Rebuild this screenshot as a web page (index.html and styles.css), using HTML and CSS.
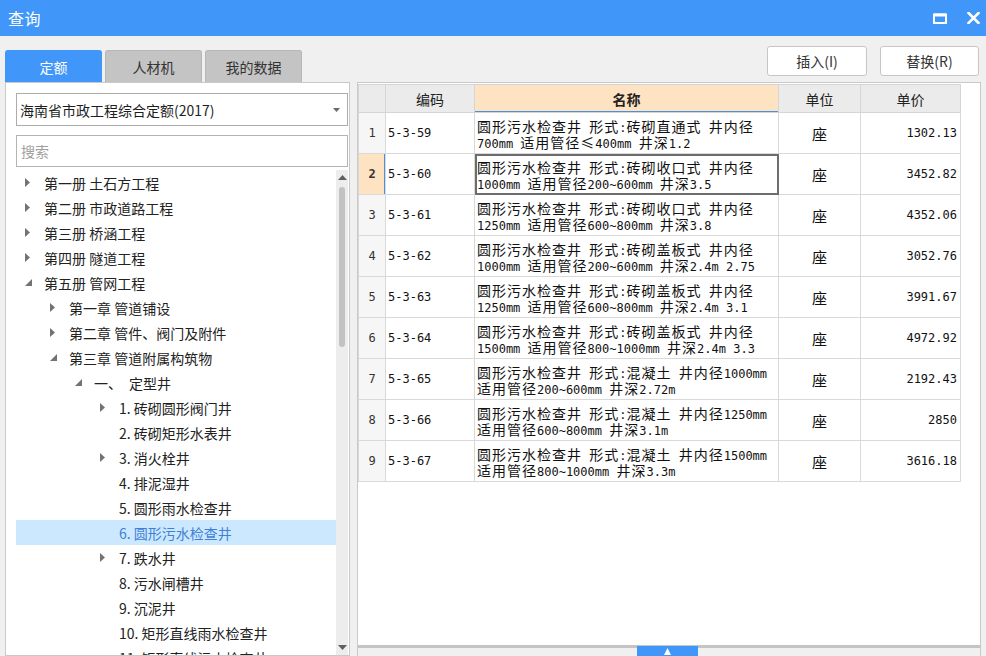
FILE: index.html
```html
<!DOCTYPE html>
<html lang="zh-CN">
<head>
<meta charset="utf-8">
<title>查询</title>
<link rel="stylesheet" href="styles.css">
</head>
<body>
<div class="titlebar">
  <div class="title">查询</div>
  <div class="win-btns">
    <svg class="win-icon" width="14" height="11" viewBox="0 0 14 11"><rect x="1" y="1.5" width="12" height="8.5" fill="none" stroke="#fff" stroke-width="2"/><rect x="1" y="0.5" width="12" height="3" fill="#fff"/></svg>
    <svg class="win-icon" width="13" height="12" viewBox="0 0 13 12"><path d="M1.5 1 L11.5 11 M11.5 1 L1.5 11" stroke="#fff" stroke-width="2.6" stroke-linecap="square"/></svg>
  </div>
</div>
<div class="main">
  <div class="left-col">
    <div class="tabs">
      <div class="tab active">定额</div>
      <div class="tab">人材机</div>
      <div class="tab">我的数据</div>
    </div>
    <div class="left-panel">
      <div class="combo">
        <span class="combo-text">海南省市政工程综合定额(2017)</span>
        <svg width="7" height="4" viewBox="0 0 7 4"><polygon points="0,0 7,0 3.5,4" fill="#6a6a6a"/></svg>
      </div>
      <div class="search">搜索</div>
      <div class="tree">
        <div class="tree-list">
          <div class="ti l0"><span class="arr"><svg width="5" height="9" viewBox="0 0 5 9"><polygon points="0,0 5,4.5 0,9" fill="#737373"/></svg></span>第一册 土石方工程</div>
          <div class="ti l0"><span class="arr"><svg width="5" height="9" viewBox="0 0 5 9"><polygon points="0,0 5,4.5 0,9" fill="#737373"/></svg></span>第二册 市政道路工程</div>
          <div class="ti l0"><span class="arr"><svg width="5" height="9" viewBox="0 0 5 9"><polygon points="0,0 5,4.5 0,9" fill="#737373"/></svg></span>第三册 桥涵工程</div>
          <div class="ti l0"><span class="arr"><svg width="5" height="9" viewBox="0 0 5 9"><polygon points="0,0 5,4.5 0,9" fill="#737373"/></svg></span>第四册 隧道工程</div>
          <div class="ti l0"><span class="arr"><svg width="7" height="7" viewBox="0 0 7 7"><polygon points="7,0 7,7 0,7" fill="#737373"/></svg></span>第五册 管网工程</div>
          <div class="ti l1"><span class="arr"><svg width="5" height="9" viewBox="0 0 5 9"><polygon points="0,0 5,4.5 0,9" fill="#737373"/></svg></span>第一章 管道铺设</div>
          <div class="ti l1"><span class="arr"><svg width="5" height="9" viewBox="0 0 5 9"><polygon points="0,0 5,4.5 0,9" fill="#737373"/></svg></span>第二章 管件、阀门及附件</div>
          <div class="ti l1"><span class="arr"><svg width="7" height="7" viewBox="0 0 7 7"><polygon points="7,0 7,7 0,7" fill="#737373"/></svg></span>第三章 管道附属构筑物</div>
          <div class="ti l2"><span class="arr"><svg width="7" height="7" viewBox="0 0 7 7"><polygon points="7,0 7,7 0,7" fill="#737373"/></svg></span>一、&ensp;定型井</div>
          <div class="ti l3"><span class="arr"><svg width="5" height="9" viewBox="0 0 5 9"><polygon points="0,0 5,4.5 0,9" fill="#737373"/></svg></span>1. 砖砌圆形阀门井</div>
          <div class="ti l3"><span class="arr"></span>2. 砖砌矩形水表井</div>
          <div class="ti l3"><span class="arr"><svg width="5" height="9" viewBox="0 0 5 9"><polygon points="0,0 5,4.5 0,9" fill="#737373"/></svg></span>3. 消火栓井</div>
          <div class="ti l3"><span class="arr"></span>4. 排泥湿井</div>
          <div class="ti l3"><span class="arr"></span>5. 圆形雨水检查井</div>
          <div class="ti l3 sel"><span class="arr"></span>6. 圆形污水检查井</div>
          <div class="ti l3"><span class="arr"><svg width="5" height="9" viewBox="0 0 5 9"><polygon points="0,0 5,4.5 0,9" fill="#737373"/></svg></span>7. 跌水井</div>
          <div class="ti l3"><span class="arr"></span>8. 污水闸槽井</div>
          <div class="ti l3"><span class="arr"></span>9. 沉泥井</div>
          <div class="ti l3"><span class="arr"></span>10. 矩形直线雨水检查井</div>
          <div class="ti l3"><span class="arr"></span>11. 矩形直线污水检查井</div>
        </div>
        <div class="vscroll">
          <svg class="sarrow" width="9" height="5" viewBox="0 0 9 5"><polygon points="0,5 9,5 4.5,0" fill="#5f5f5f"/></svg>
          <div class="thumb"></div>
          <svg class="sarrow bottom" width="9" height="5" viewBox="0 0 9 5"><polygon points="0,0 9,0 4.5,5" fill="#5f5f5f"/></svg>
        </div>
      </div>
    </div>
  </div>
  <div class="right-col">
    <div class="toolbar">
      <button class="btn">插入(I)</button>
      <button class="btn">替换(R)</button>
    </div>
    <div class="right-panel">
      <div class="grid-area">
        <table class="grid">
          <colgroup>
            <col class="c-num"><col class="c-code"><col class="c-name"><col class="c-unit"><col class="c-price">
          </colgroup>
          <thead>
            <tr><th></th><th>编码</th><th class="hl">名称</th><th>单位</th><th>单价</th></tr>
          </thead>
          <tbody>
            <tr><td class="num">1</td><td class="code">5-3-59</td><td class="name"><div class="ln"><span class="c">圆形污水检查井</span> <span class="c">形式</span>:<span class="c">砖砌直通式</span> <span class="c">井内径</span></div><div class="ln">700mm <span class="c">适用管径≤</span>400mm <span class="c">井深</span>1.2</div></td><td class="unit">座</td><td class="price">1302.13</td></tr>
            <tr class="cur"><td class="num">2</td><td class="code">5-3-60</td><td class="name selcell"><div class="ln"><span class="c">圆形污水检查井</span> <span class="c">形式</span>:<span class="c">砖砌收口式</span> <span class="c">井内径</span></div><div class="ln">1000mm <span class="c">适用管径</span>200~600mm <span class="c">井深</span>3.5</div></td><td class="unit">座</td><td class="price">3452.82</td></tr>
            <tr><td class="num">3</td><td class="code">5-3-61</td><td class="name"><div class="ln"><span class="c">圆形污水检查井</span> <span class="c">形式</span>:<span class="c">砖砌收口式</span> <span class="c">井内径</span></div><div class="ln">1250mm <span class="c">适用管径</span>600~800mm <span class="c">井深</span>3.8</div></td><td class="unit">座</td><td class="price">4352.06</td></tr>
            <tr><td class="num">4</td><td class="code">5-3-62</td><td class="name"><div class="ln"><span class="c">圆形污水检查井</span> <span class="c">形式</span>:<span class="c">砖砌盖板式</span> <span class="c">井内径</span></div><div class="ln">1000mm <span class="c">适用管径</span>200~600mm <span class="c">井深</span>2.4m 2.75</div></td><td class="unit">座</td><td class="price">3052.76</td></tr>
            <tr><td class="num">5</td><td class="code">5-3-63</td><td class="name"><div class="ln"><span class="c">圆形污水检查井</span> <span class="c">形式</span>:<span class="c">砖砌盖板式</span> <span class="c">井内径</span></div><div class="ln">1250mm <span class="c">适用管径</span>600~800mm <span class="c">井深</span>2.4m 3.1</div></td><td class="unit">座</td><td class="price">3991.67</td></tr>
            <tr><td class="num">6</td><td class="code">5-3-64</td><td class="name"><div class="ln"><span class="c">圆形污水检查井</span> <span class="c">形式</span>:<span class="c">砖砌盖板式</span> <span class="c">井内径</span></div><div class="ln">1500mm <span class="c">适用管径</span>800~1000mm <span class="c">井深</span>2.4m 3.3</div></td><td class="unit">座</td><td class="price">4972.92</td></tr>
            <tr><td class="num">7</td><td class="code">5-3-65</td><td class="name"><div class="ln"><span class="c">圆形污水检查井</span> <span class="c">形式</span>:<span class="c">混凝土</span> <span class="c">井内径</span>1000mm</div><div class="ln"><span class="c">适用管径</span>200~600mm <span class="c">井深</span>2.72m</div></td><td class="unit">座</td><td class="price">2192.43</td></tr>
            <tr><td class="num">8</td><td class="code">5-3-66</td><td class="name"><div class="ln"><span class="c">圆形污水检查井</span> <span class="c">形式</span>:<span class="c">混凝土</span> <span class="c">井内径</span>1250mm</div><div class="ln"><span class="c">适用管径</span>600~800mm <span class="c">井深</span>3.1m</div></td><td class="unit">座</td><td class="price">2850</td></tr>
            <tr><td class="num">9</td><td class="code">5-3-67</td><td class="name"><div class="ln"><span class="c">圆形污水检查井</span> <span class="c">形式</span>:<span class="c">混凝土</span> <span class="c">井内径</span>1500mm</div><div class="ln"><span class="c">适用管径</span>800~1000mm <span class="c">井深</span>3.3m</div></td><td class="unit">座</td><td class="price">3616.18</td></tr>
          </tbody>
        </table>
      </div>
      <div class="splitter">
        <div class="handle"><svg width="7" height="7" viewBox="0 0 7 7"><polygon points="0,7 7,7 3.5,0" fill="#fff"/></svg></div>
      </div>
    </div>
  </div>
</div>
</body>
</html>
```
FILE: styles.css
```css
* { box-sizing: border-box; }
html, body { margin: 0; padding: 0; }
body {
  width: 986px;
  height: 656px;
  overflow: hidden;
  background: #f0f0f0;
  font-family: "Noto Sans CJK SC", "Noto Sans", sans-serif;
  color: #333;
}
.titlebar {
  height: 36px;
  background: #4096f9;
  display: flex;
  align-items: center;
  padding: 0 6px 0 8px;
  color: #fff;
}
.title { flex: 1; font-size: 16px; letter-spacing: 0.5px; }
.win-btns { display: flex; align-items: center; gap: 20px; }
.win-icon { display: block; }

.main {
  display: grid;
  grid-template-columns: 345px 624px;
  column-gap: 7px;
  padding-left: 5px;
  height: 620px;
}
.left-col, .right-col { display: flex; flex-direction: column; min-height: 0; }

.tabs {
  height: 46px;
  display: flex;
  align-items: flex-end;
  gap: 3px;
}
.tab {
  width: 97px;
  height: 32px;
  border-radius: 3px 3px 0 0;
  background: #c4c4c4;
  border: 1px solid #b7b7b7;
  border-bottom: none;
  display: flex;
  align-items: center;
  justify-content: center;
  font-size: 14px;
  color: #333;
}
.tab.active { background: #4096f9; border-color: #4096f9; color: #fff; }

.left-panel {
  flex: 1;
  min-height: 0;
  background: #fff;
  border: 1px solid #c9c9c9;
  padding: 10px 1px 0 10px;
  display: flex;
  flex-direction: column;
}
.combo {
  height: 33px;
  border: 1px solid #acacac;
  display: flex;
  align-items: center;
  padding: 0 7px 0 3px;
  font-size: 14px;
  color: #1e1e1e;
  margin-bottom: 9px;
}
.combo-text { flex: 1; }
.search {
  height: 32px;
  border: 1px solid #b4b4b4;
  display: flex;
  align-items: center;
  padding-left: 4px;
  font-size: 14px;
  color: #a0a0a0;
  margin-bottom: 3px;
}
.tree { flex: 1; min-height: 0; display: flex; }
.tree-list { flex: 1; overflow: hidden; }
.ti {
  height: 25px;
  display: flex;
  align-items: center;
  font-size: 14px;
  color: #222;
  white-space: nowrap;
}
.ti .arr { width: 19px; flex: none; display: flex; align-items: center; }
.ti .arr svg { display: block; }
.l0 { padding-left: 9px; }
.l1 { padding-left: 34px; }
.l2 { padding-left: 59px; }
.l3 { padding-left: 84px; }
.ti.sel { background: #cce8ff; color: #3f80d6; }

.vscroll {
  width: 12px;
  flex: none;
  background: #ededed;
  display: flex;
  flex-direction: column;
  align-items: center;
  padding: 5px 0 5px;
}
.sarrow { display: block; flex: none; }
.thumb {
  width: 6px;
  height: 160px;
  margin-top: 7px;
  border-radius: 3px;
  background: #c2c2c2;
}
.sarrow.bottom { margin-top: auto; }

.toolbar {
  height: 46px;
  display: flex;
  justify-content: flex-end;
  align-items: flex-start;
  gap: 13px;
  padding: 10px 2px 0 0;
}
.btn {
  width: 100px;
  height: 30px;
  background: #fff;
  border: 1px solid #c6c6c6;
  border-radius: 3px;
  font-family: "Noto Sans CJK SC", "Noto Sans", sans-serif;
  font-size: 14px;
  color: #333;
  padding: 0;
}
.btn + .btn { width: 99px; }

.right-panel {
  flex: 1;
  min-height: 0;
  background: #fff;
  border: 1px solid #c9c9c9;
  border-bottom: none;
  display: flex;
  flex-direction: column;
}
.grid-area { flex: 1; min-height: 0; padding-top: 1px; overflow: hidden; }
.grid {
  border-collapse: collapse;
  table-layout: fixed;
  width: 602px;
}
.c-num { width: 27px; }
.c-code { width: 89px; }
.c-name { width: 304px; }
.c-unit { width: 82px; }
.c-price { width: 100px; }
.grid th {
  height: 28px;
  background: #ebebeb;
  border: 1px solid #d5d5d5;
  font-weight: normal;
  font-size: 14px;
  color: #222;
  padding: 0;
}
.grid th.hl {
  background: #fde3c1;
  font-weight: bold;
  box-shadow: inset 0 -1px 0 #4a90e2;
}
.grid td {
  height: 41px;
  border: 1px solid #d9d9d9;
  padding: 0;
  color: #111;
  vertical-align: middle;
}
.grid td.num {
  background: #f6f6f6;
  text-align: center;
  font-family: "DejaVu Sans Mono", monospace;
  font-size: 12px;
  color: #333;
}
.grid tr.cur td.num {
  background: #fde3c1;
  font-weight: bold;
  box-shadow: inset -1px 0 0 #4a90e2;
}
.grid td.code {
  font-family: "DejaVu Sans Mono", monospace;
  font-size: 12px;
  padding-left: 2px;
}
.grid td.name {
  font-family: "DejaVu Sans Mono", monospace;
  font-size: 12px;
  white-space: nowrap;
  padding: 2px 1px 0 2px;
  overflow: hidden;
}
.grid td.name .ln {
  display: block;
  height: 16px;
  line-height: 16px;
  white-space: pre;
}
.grid td.name .c {
  font-family: "Noto Sans CJK SC", sans-serif;
  font-size: 14px;
  line-height: 16px;
  letter-spacing: 1px;
}
.grid td.selcell { outline: 2px solid #6d6d6d; outline-offset: -2px; }
.grid td.unit {
  text-align: center;
  font-size: 15px;
}
.grid td.price {
  text-align: right;
  padding-right: 3px;
  font-family: "DejaVu Sans Mono", monospace;
  font-size: 12px;
}

.splitter {
  height: 11px;
  flex: none;
  border-top: 3px solid #c4c4c4;
  background: #f0f0f0;
  display: flex;
  justify-content: center;
  align-items: flex-end;
}
.handle {
  width: 61px;
  height: 10px;
  background: #4096f9;
  display: flex;
  align-items: center;
  justify-content: center;
  margin-right: 3px;
}
.handle svg { display: block; }
```
